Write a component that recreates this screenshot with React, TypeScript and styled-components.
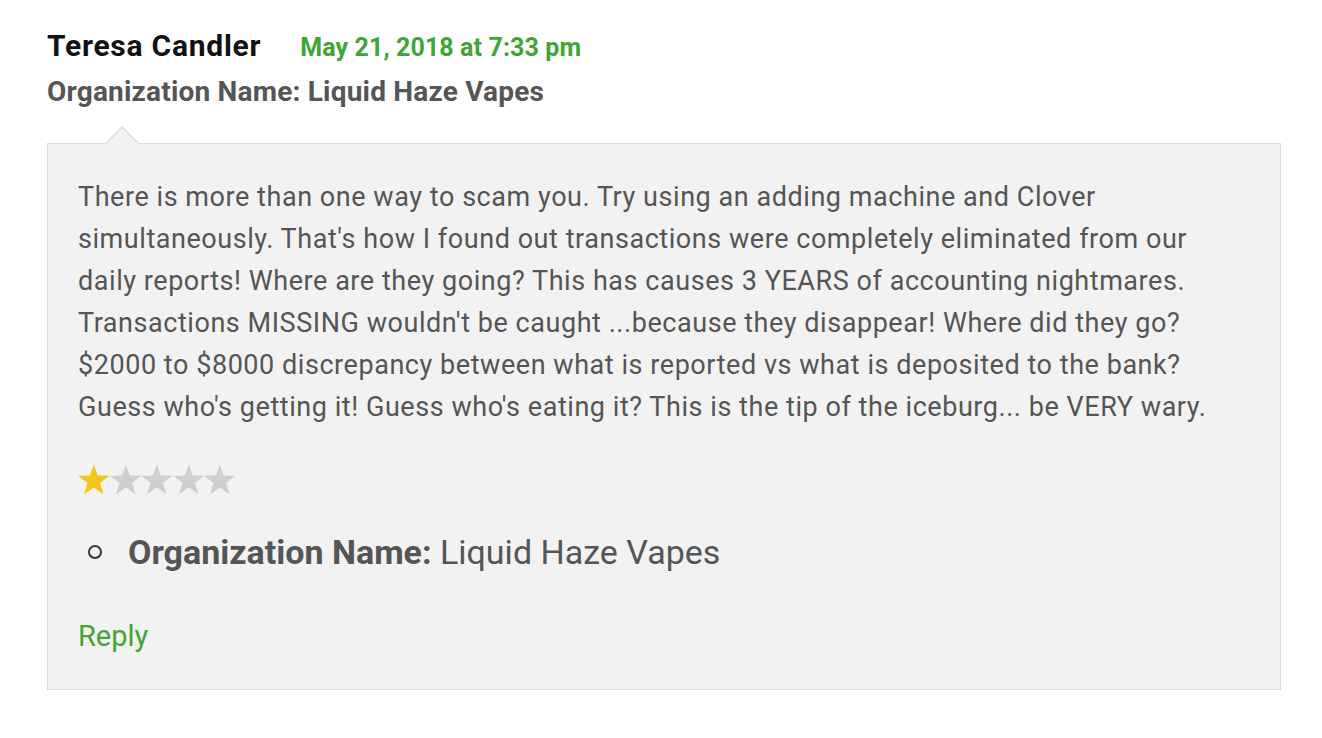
import React from "react"
import styled, { createGlobalStyle } from "styled-components"

const GlobalStyle = createGlobalStyle`
    html, body {
        margin: 0;
        padding: 0;
        background: #fff;
        font-family: Roboto, "Liberation Sans", sans-serif;
    }
`

const lines = [
    "There is more than one way to scam you. Try using an adding machine and Clover",
    "simultaneously. That's how I found out transactions were completely eliminated from our",
    "daily reports! Where are they going? This has causes 3 YEARS of accounting nightmares.",
    "Transactions MISSING wouldn't be caught ...because they disappear! Where did they go?",
    "$2000 to $8000 discrepancy between what is reported vs what is deposited to the bank?",
    "Guess who's getting it! Guess who's eating it? This is the tip of the iceburg... be VERY wary.",
]

const Star = ({ on }: { on: boolean }) => (
    <svg width="31.6" height="31.6" viewBox="0 0 24 24">
        <path
            d="M12 0.3L14.94 8.76L23.9 8.94L16.76 14.35L19.35 22.9L12 17.8L4.65 22.9L7.24 14.35L0.1 8.94L9.06 8.76Z"
            fill={on ? "#f5c518" : "#cfcfcf"}
        />
    </svg>
)

const App = () => {
    return (
        <Page>
            <GlobalStyle />
            <Header>
                <Author>Teresa Candler</Author>
                <DateLink>May 21, 2018 at 7:33 pm</DateLink>
            </Header>
            <OrgTitle>Organization Name: Liquid Haze Vapes</OrgTitle>

            <Bubble>
                <Body>
                    {lines.map((line, index) => (
                        <Line key={index}>{line}</Line>
                    ))}
                </Body>

                <Stars>
                    {[0, 1, 2, 3, 4].map((i) => (
                        <Star key={i} on={i === 0} />
                    ))}
                </Stars>

                <Meta>
                    <MetaItem>
                        <strong>Organization Name:</strong> Liquid Haze Vapes
                    </MetaItem>
                </Meta>

                <Reply href="#">Reply</Reply>
            </Bubble>
        </Page>
    )
}

const Page = styled.div`
    padding: 26px 41px 48px 47px;
    width: 1234px;
`

const Header = styled.div`
    display: flex;
    align-items: baseline;
    gap: 39px;
`

const Author = styled.div`
    font-size: 30px;
    letter-spacing: 0.75px;
    font-weight: 700;
    color: #111;
    line-height: 40px;
`

const DateLink = styled.div`
    font-size: 25px;
    letter-spacing: 0.1px;
    font-weight: 700;
    color: #3fa535;
`

const OrgTitle = styled.div`
    font-size: 28px;
    letter-spacing: 0.2px;
    font-weight: 700;
    color: #555;
    line-height: 40px;
    margin-top: 6px;
`

const Bubble = styled.div`
    position: relative;
    margin-top: 31px;
    background: #f2f2f2;
    border: 1px solid #dcdcdc;
    padding: 32px 30px 36px 30px;

    &::before,
    &::after {
        content: "";
        position: absolute;
        width: 0;
        height: 0;
    }
    &::before {
        left: 56px;
        top: -18px;
        border-left: 18px solid transparent;
        border-right: 18px solid transparent;
        border-bottom: 18px solid #dcdcdc;
    }
    &::after {
        left: 57px;
        top: -16px;
        border-left: 17px solid transparent;
        border-right: 17px solid transparent;
        border-bottom: 17px solid #f2f2f2;
    }
`

const Body = styled.div`
    font-size: 27px;
    letter-spacing: 0.55px;
    line-height: 42px;
    color: #555;
`

const Line = styled.div`
    white-space: nowrap;
`

const Stars = styled.div`
    display: flex;
    margin-top: 36px;
`

const Meta = styled.ul`
    list-style: none;
    margin: 36px 0 0 0;
    padding-left: 50px;
`

const MetaItem = styled.li`
    position: relative;
    font-size: 34px;
    line-height: 40px;
    color: #555;

    &::before {
        content: "";
        position: absolute;
        left: -40px;
        top: 13px;
        width: 10px;
        height: 10px;
        border: 2px solid #333;
        border-radius: 50%;
    }

    strong {
        font-weight: 700;
    }
`

const Reply = styled.a`
    display: inline-block;
    margin-top: 47px;
    font-size: 29px;
    color: #3fa535;
    text-decoration: none;
`

export default App
